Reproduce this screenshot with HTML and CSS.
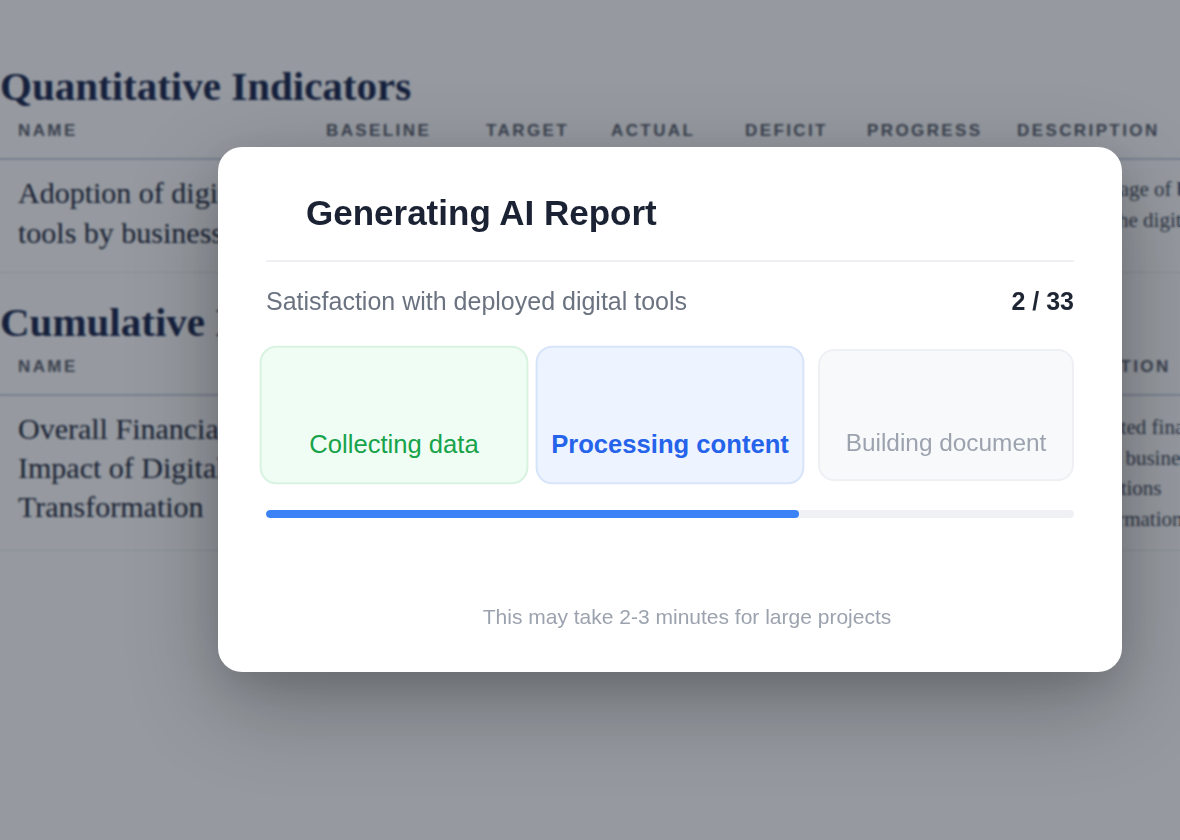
FILE: index.html
```html
<!DOCTYPE html>
<html lang="en">
<head>
<meta charset="utf-8">
<title>Generating AI Report</title>
<link rel="stylesheet" href="styles.css">
</head>
<body>
<main class="page">
  <section class="section">
    <h2 class="section-title">Quantitative Indicators</h2>
    <table class="ind-table t1">
      <colgroup>
        <col class="c-name"><col class="c-base"><col class="c-target"><col class="c-actual"><col class="c-deficit"><col class="c-progress"><col class="c-desc">
      </colgroup>
      <thead>
        <tr><th>Name</th><th>Baseline</th><th>Target</th><th>Actual</th><th>Deficit</th><th>Progress</th><th>Description</th></tr>
      </thead>
      <tbody>
        <tr>
          <td class="name">Adoption of digital tools by businesses</td>
          <td>12%</td><td>60%</td><td>41%</td><td>19%</td><td>68%</td>
          <td class="desc">The percentage of businesses<br>now using the digital tools</td>
        </tr>
      </tbody>
    </table>
  </section>
  <section class="section">
    <h2 class="section-title">Cumulative Indicators</h2>
    <table class="ind-table t2">
      <colgroup>
        <col class="c-name"><col class="c-base2"><col class="c-target"><col class="c-actual"><col class="c-deficit"><col class="c-progress"><col class="c-desc">
      </colgroup>
      <thead>
        <tr><th>Name</th><th>Baseline</th><th>Target</th><th>Actual</th><th>Deficit</th><th>Progress</th><th>Description</th></tr>
      </thead>
      <tbody>
        <tr>
          <td class="name">Overall Financial Impact of Digital Transformation</td>
          <td>$0</td><td>$2.4M</td><td>$1.6M</td><td>$0.8M</td><td>66%</td>
          <td class="desc">The estimated financial<br>gains in all business<br>from operations<br>via transformation</td>
        </tr>
      </tbody>
    </table>
  </section>
</main>

<div class="overlay">
  <div class="modal" role="dialog" aria-labelledby="modal-title">
    <header class="modal-header">
      <h1 id="modal-title" class="modal-title">Generating AI Report</h1>
    </header>
    <div class="status-row">
      <span class="status-label">Satisfaction with deployed digital tools</span>
      <span class="status-count">2 / 33</span>
    </div>
    <div class="steps">
      <div class="step step-done"><span class="step-label">Collecting data</span></div>
      <div class="step step-active"><span class="step-label">Processing content</span></div>
      <div class="step step-pending"><span class="step-label">Building document</span></div>
    </div>
    <div class="bar"><div class="bar-fill" style="width: 66%"></div></div>
    <p class="note">This may take 2-3 minutes for large projects</p>
  </div>
</div>
</body>
</html>
```

FILE: styles.css
```css
* { box-sizing: border-box; }

html, body {
  margin: 0;
  padding: 0;
  height: 100%;
  overflow: hidden;
  background: #ffffff;
}

.page {
  width: 1400px;
  padding-top: 61px;
  font-family: "Liberation Serif", "Times New Roman", serif;
  color: #2b3040;
}

.section + .section { margin-top: 24px; }

.section-title {
  margin: 0;
  font-family: "Liberation Serif", "Times New Roman", serif;
  font-size: 41px;
  line-height: 50px;
  font-weight: 700;
  color: #1a274d;
}

.ind-table {
  border-collapse: collapse;
  table-layout: fixed;
  width: 1300px;
}

.c-name { width: 308px; }
.c-base { width: 160px; }
.c-base2 { width: 171px; }
.c-target { width: 125px; }
.c-actual { width: 134px; }
.c-deficit { width: 122px; }
.c-progress { width: 150px; }
.c-desc { width: 301px; }

.ind-table th {
  text-align: left;
  padding: 10px 18px 17px;
  font-family: "Liberation Sans", Arial, sans-serif;
  font-size: 17px;
  line-height: 20px;
  font-weight: 700;
  letter-spacing: 2.4px;
  text-transform: uppercase;
  color: #5c616e;
  border-bottom: 2px solid #c9cfdf;
  white-space: nowrap;
}

.ind-table td {
  vertical-align: top;
  padding: 13px 18px 19px;
  font-size: 30px;
  line-height: 40px;
  color: #20263a;
  border-bottom: 1px solid #e3e6eb;
}

.t2 td { line-height: 39px; }

.ind-table td.desc {
  font-size: 21px;
  line-height: 30.5px;
  color: #454b5a;
  padding-top: 16px;
  padding-bottom: 16px;
}

.t1 td.desc { padding-top: 14px; padding-left: 21px; }

.overlay {
  position: fixed;
  inset: 0;
  background: rgba(17, 24, 39, 0.44);
  backdrop-filter: blur(0.8px);
  display: flex;
  align-items: center;
  justify-content: center;
  padding-left: 160px;
  padding-bottom: 21px;
}

.modal {
  width: 904px;
  background: #ffffff;
  border-radius: 24px;
  padding: 45px 48px 43px;
  box-shadow: 0 30px 90px rgba(0, 0, 0, 0.3), 0 10px 30px rgba(0, 0, 0, 0.08);
  font-family: "Liberation Sans", Arial, Helvetica, sans-serif;
}

.modal-header {
  padding: 0 0 26px 40px;
  border-bottom: 2px solid #eef0f4;
}

.modal-title {
  margin: 0;
  font-size: 35px;
  line-height: 42px;
  font-weight: 700;
  color: #1a2233;
}

.status-row {
  margin-top: 24px;
  display: flex;
  justify-content: space-between;
  align-items: center;
  font-size: 25px;
  line-height: 30px;
}

.status-label { color: #6b7280; }
.status-count { color: #1f2633; font-weight: 700; }

.steps {
  margin-top: 33px;
  display: grid;
  grid-template-columns: repeat(3, 1fr);
  gap: 20px;
}

.step {
  height: 132px;
  border: 2px solid #eef0f4;
  border-radius: 16px;
  background: #f8f9fb;
  display: flex;
  flex-direction: column;
  justify-content: flex-end;
  align-items: center;
  padding-bottom: 22px;
}

.step-label {
  font-size: 24.4px;
  line-height: 29px;
  white-space: nowrap;
}

.step-done {
  background: #f0fdf4;
  border-color: #d9f3e1;
  transform: scale(1.05);
}
.step-done .step-label { color: #16a34a; }

.step-active {
  background: #eef4ff;
  border-color: #d7e4fa;
  transform: scale(1.05);
}
.step-active .step-label { color: #2563eb; font-weight: 700; }

.step-pending .step-label { color: #9ca3af; }

.bar {
  margin-top: 29px;
  height: 8px;
  border-radius: 4px;
  background: #eff1f5;
  overflow: hidden;
}

.bar-fill {
  height: 100%;
  border-radius: 4px;
  background: #3b82f6;
}

.note {
  margin: 86px 0 0;
  padding-left: 34px;
  text-align: center;
  font-size: 21px;
  line-height: 25px;
  color: #9ca3af;
}
```
